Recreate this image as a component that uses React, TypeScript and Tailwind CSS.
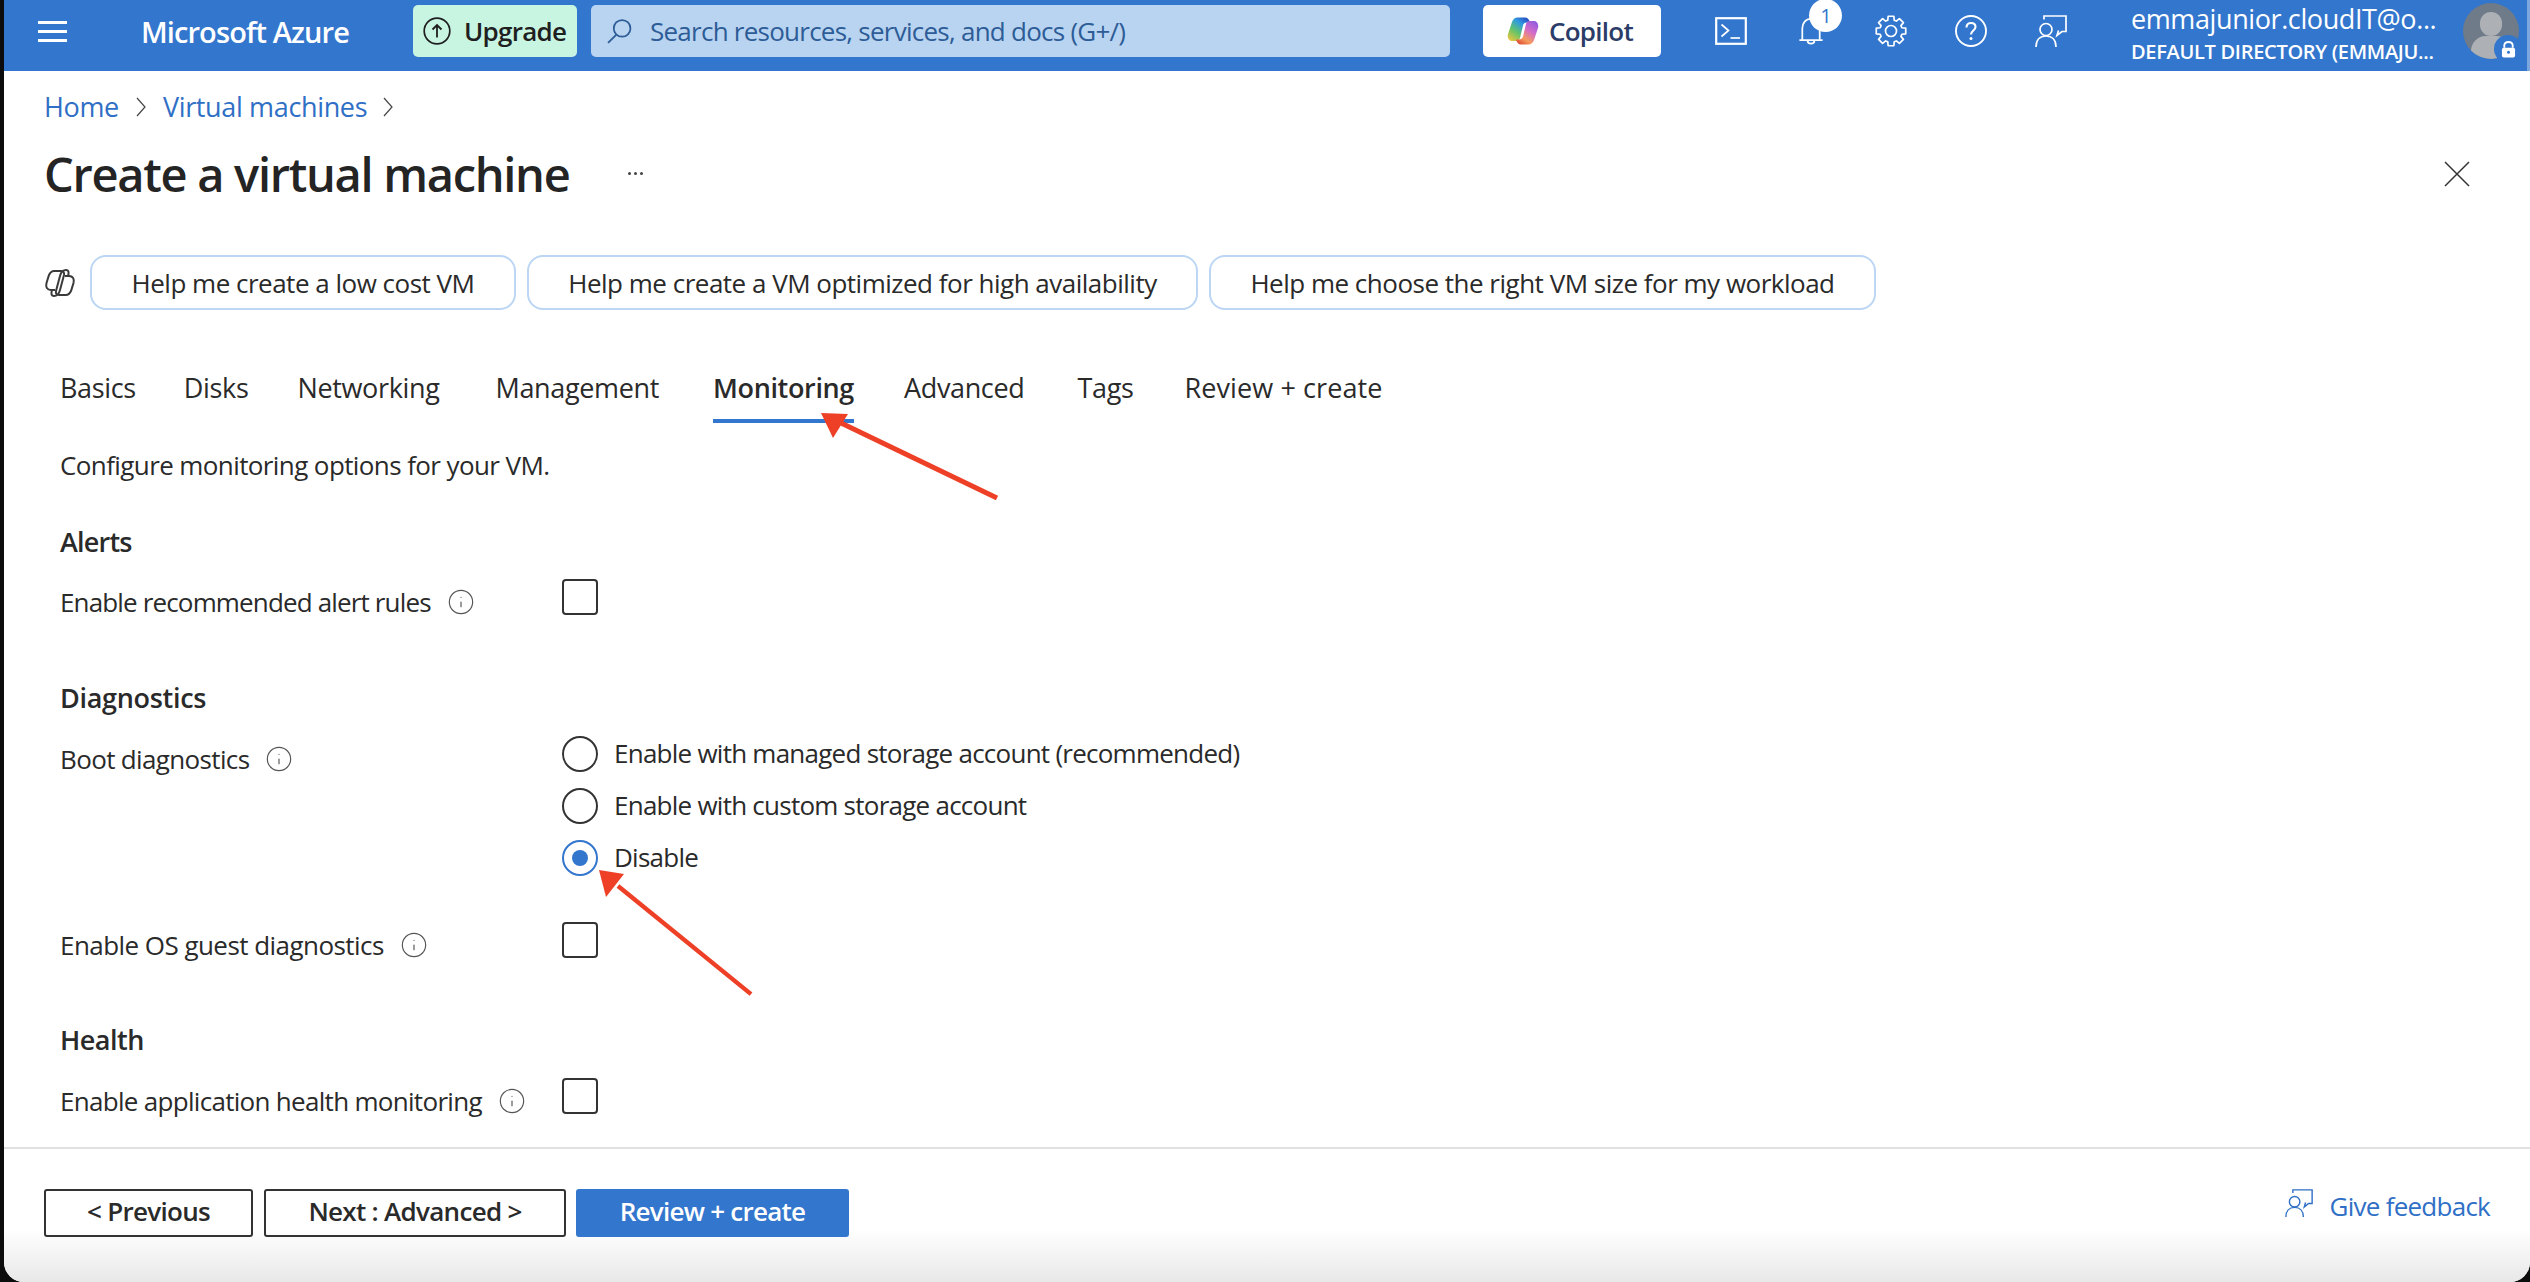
import React from "react";
import { Info } from "lucide-react";

function gearPath() {
  const pts: string[] = [];
  for (let i = 0; i < 8; i++) {
    const a = (i * Math.PI) / 4;
    const seq: [number, number][] = [
      [11.3, -0.29],
      [15, -0.19],
      [15, 0.19],
      [11.3, 0.29],
    ];
    for (const [r, d] of seq) {
      const x = 16 + r * Math.sin(a + d);
      const y = 16 - r * Math.cos(a + d);
      pts.push(`${x.toFixed(2)} ${y.toFixed(2)}`);
    }
  }
  return "M" + pts.join("L") + "Z";
}

function Feedback({ cls, w = "1.7" }: { cls: string; w?: string }) {
  return (
    <svg viewBox="0 0 32 32" fill="none" stroke="currentColor" strokeWidth={w} className={cls}>
      <path d="M9 4.5V1H31V16.5H27L22 20.5L23.5 15.5" />
      <circle cx="11" cy="14.5" r="6" />
      <path d="M1 32C1 25 5 21 11 21C17 21 21 25 21 32" />
    </svg>
  );
}

function InfoIcon() {
  return <Info size={28} strokeWidth={1} className="text-[#555] shrink-0" />;
}

function Check() {
  return <div className="w-[36px] h-[36px] border-2 border-[#333] rounded-[4px] bg-white shrink-0" />;
}

function Radio({ label, on }: { label: string; on?: boolean }) {
  return (
    <div className="flex items-center h-[36px] gap-[16px]">
      {on ? (
        <div className="w-[36px] h-[36px] rounded-full border-2 border-[#3376cd] flex items-center justify-center shrink-0">
          <div className="w-[16px] h-[16px] rounded-full bg-[#3376cd]" />
        </div>
      ) : (
        <div className="w-[36px] h-[36px] rounded-full border-2 border-[#333] shrink-0" />
      )}
      <span className="mt-[-2px]">{label}</span>
    </div>
  );
}

function Chip({ text, w }: { text: string; w: string }) {
  return (
    <div className={`${w} h-[55px] flex items-center justify-center border-2 border-[#bcd6f4] rounded-[16px] bg-white pt-[1px] tracking-[-0.5px]`}>
      {text}
    </div>
  );
}

function FieldLabel({ text, track }: { text: string; track: string }) {
  return (
    <div className="w-[502px] h-[46px] flex items-center gap-[16px] shrink-0">
      <span className={track}>{text}</span>
      <InfoIcon />
    </div>
  );
}

const tabs: { t: string; cls: string }[] = [
  { t: "Basics", cls: "" },
  { t: "Disks", cls: "ml-[48px]" },
  { t: "Networking", cls: "ml-[49px]" },
  { t: "Management", cls: "ml-[56px]" },
  { t: "Monitoring", cls: "ml-[54px] font-semibold border-b-[4px] border-[#3376cd]" },
  { t: "Advanced", cls: "ml-[50px]" },
  { t: "Tags", cls: "ml-[53px]" },
  { t: "Review + create", cls: "ml-[51px] tracking-[0.1px]" },
];

export default function App() {
  return (
    <div className="relative w-[2530px] h-[1282px] bg-[#0c0c0c] overflow-hidden pl-[4px] font-['Open_Sans','Noto_Sans',sans-serif] text-[26px] tracking-[-0.75px] text-[#2a2a2a]">
      <div className="h-full flex flex-col bg-white rounded-b-[20px] overflow-hidden">
        {/* top bar */}
        <header className="h-[71px] shrink-0 bg-[#3376cd] border-r-[3px] border-[#7ba6de] flex items-start text-white">
          <div className="w-[29px] mt-[21px] ml-[34px] flex flex-col gap-[6px]">
            <div className="h-[3px] bg-white" />
            <div className="h-[3px] bg-white" />
            <div className="h-[3px] bg-white" />
          </div>
          <div className="ml-[74px] mt-[11px] w-[272px] text-[29px] leading-[42px] font-semibold tracking-[-0.9px]">Microsoft Azure</div>
          <div className="mt-[5px] w-[164px] h-[52px] bg-[#c8f4e2] rounded-[5px] flex items-center pl-[10px] gap-[13px] text-[#1f1f1f] font-semibold text-[26px]">
            <svg viewBox="0 0 28 28" fill="none" stroke="currentColor" className="w-[28px] h-[28px] shrink-0">
              <circle cx="14" cy="14" r="12.8" strokeWidth="1.7" />
              <path d="M14 20.5V8M9.5 12.5L14 8L18.5 12.5" strokeWidth="1.8" />
            </svg>
            Upgrade
          </div>
          <div className="ml-[14px] mt-[5px] w-[859px] h-[52px] bg-[#b9d4f0] rounded-[5px] flex items-center pl-[16px] gap-[18px] text-[#2d5c97]">
            <svg viewBox="0 0 24 24" fill="none" stroke="currentColor" strokeWidth="1.7" className="w-[25px] h-[25px] shrink-0">
              <circle cx="14.5" cy="9" r="8" />
              <path d="M9 15L1 23" />
            </svg>
            Search resources, services, and docs (G+/)
          </div>
          <div className="ml-[33px] mt-[5px] w-[178px] h-[52px] bg-white rounded-[5px] flex items-center pl-[24px] gap-[10px] text-[#2b3c68] font-semibold">
            <svg viewBox="0 0 32 30" className="w-[32px] h-[30px] shrink-0">
              <defs>
                <linearGradient id="cpa" x1="0.1" y1="1" x2="0.75" y2="0">
                  <stop offset="0" stopColor="#f3c53c" />
                  <stop offset="0.4" stopColor="#63c46a" />
                  <stop offset="0.75" stopColor="#2f9be0" />
                  <stop offset="1" stopColor="#2a55c8" />
                </linearGradient>
                <linearGradient id="cpb" x1="0.85" y1="0" x2="0.2" y2="1">
                  <stop offset="0" stopColor="#8f5ce0" />
                  <stop offset="0.4" stopColor="#d46bc8" />
                  <stop offset="0.75" stopColor="#f59c5c" />
                  <stop offset="1" stopColor="#df4f38" />
                </linearGradient>
              </defs>
              <path d="M11 1.5C7.5 1.5 6 3.5 5 6L1 18C0 22 2 25 5.5 25H9.5C11.5 25 12.5 24 13 22L16 9.5C16.5 7.5 18 6.5 20 6.5H23C22 3 20.5 1.5 18 1.5Z" fill="url(#cpa)" />
              <path d="M21 28.5C24.5 28.5 26 26.5 27 24L31 12C32 8 30 5 26.5 5H22.5C20.5 5 19.5 6 19 8L16 20.5C15.5 22.5 14 23.5 12 23.5H9C10 27 11.5 28.5 14 28.5Z" fill="url(#cpb)" />
            </svg>
            Copilot
          </div>
          <svg viewBox="0 0 32 28" fill="none" stroke="white" className="ml-[54px] mt-[17px] w-[32px] h-[28px] shrink-0">
            <rect x="1.2" y="1.2" width="29.6" height="25.6" strokeWidth="2.2" />
            <path d="M6.5 7.5L13.5 13.5L6.5 19.5" strokeWidth="1.7" />
            <path d="M15.5 21H25" strokeWidth="1.7" />
          </svg>
          <div className="relative ml-[52px] mt-[17px] w-[24px] h-[29px] shrink-0">
            <svg viewBox="0 0 24 30" fill="none" stroke="white" strokeWidth="1.8" className="w-[24px] h-[29px]">
              <path d="M0 24H24M3 24V12C3 6 6.5 2 12 2C17.5 2 21 6 21 12V24" />
              <path d="M8.5 24.5C8.5 28.5 15.5 28.5 15.5 24.5" />
            </svg>
            <div className="absolute left-[10px] top-[-18px] w-[33px] h-[33px] rounded-full bg-white text-[#3376cd] text-[20px] flex items-center justify-center">1</div>
          </div>
          <svg viewBox="0 0 32 32" fill="none" stroke="white" strokeWidth="1.7" strokeLinejoin="round" className="ml-[52px] mt-[15px] w-[32px] h-[32px] shrink-0">
            <path d={gearPath()} />
            <circle cx="16" cy="16" r="5.5" />
          </svg>
          <svg viewBox="0 0 32 32" fill="none" stroke="white" className="ml-[48px] mt-[15px] w-[32px] h-[32px] shrink-0">
            <circle cx="16" cy="16" r="15" strokeWidth="1.9" />
            <path d="M11.5 12.5C11.5 9.5 13.5 8 16 8C18.5 8 20.5 9.5 20.5 12C20.5 15.5 16 15.5 16 19.5" strokeWidth="2.1" />
            <circle cx="16" cy="23.5" r="1.5" fill="white" stroke="none" />
          </svg>
          <Feedback cls="ml-[48px] mt-[15px] w-[32px] h-[32px] shrink-0" />
          <div className="ml-[64px] w-[321px] shrink-0">
            <div className="mt-[1px] h-[36px] leading-[36px] text-[27px] tracking-[-0.4px] whitespace-nowrap">emmajunior.cloudIT@o...</div>
            <div className="mt-[2px] h-[26px] leading-[26px] text-[20px] font-semibold tracking-[-0.3px] whitespace-nowrap">DEFAULT DIRECTORY (EMMAJU...</div>
          </div>
          <div className="relative mt-[3px] ml-[11px] w-[56px] h-[56px] rounded-full bg-[#6f7b88] overflow-hidden shrink-0">
            <div className="absolute left-[17px] top-[9px] w-[22px] h-[24px] rounded-full bg-[#adb1b6]" />
            <div className="absolute left-[8px] top-[33px] w-[40px] h-[30px] rounded-full bg-[#adb1b6]" />
          </div>
          <div className="absolute left-[2494px] top-[35px] w-[28px] h-[28px] rounded-full bg-[#3376cd] flex items-center justify-center">
            <svg viewBox="0 0 16 18" className="w-[15px] h-[17px]">
              <path d="M3.5 7V5C3.5 2.5 5.5 1 8 1C10.5 1 12.5 2.5 12.5 5V7" stroke="white" strokeWidth="2" fill="none" />
              <rect x="1" y="7" width="14" height="10.5" rx="2" fill="white" />
              <circle cx="8" cy="12" r="1.6" fill="#3376cd" />
            </svg>
          </div>
        </header>

        {/* page */}
        <main className="flex-1 min-h-0 overflow-hidden">
          <nav className="ml-[40px] mt-[16px] h-[40px] flex items-center text-[#2f6fc6] text-[27px] tracking-[-0.35px]">
            <span>Home</span>
            <svg viewBox="0 0 10 20" fill="none" stroke="#444" strokeWidth="1.2" className="w-[10px] h-[20px] ml-[17px] mr-[17px]"><path d="M1 1L9 10L1 19" /></svg>
            <span>Virtual machines</span>
            <svg viewBox="0 0 10 20" fill="none" stroke="#444" strokeWidth="1.2" className="w-[10px] h-[20px] ml-[16px]"><path d="M1 1L9 10L1 19" /></svg>
          </nav>
          <div className="ml-[40px] mt-[17px] h-[60px] flex items-center pr-[60px]">
            <h1 className="text-[47px] font-semibold tracking-[-1.3px] text-[#242424] w-[584px]">Create a virtual machine</h1>
            <div className="flex gap-[3px] mt-[-2px]">
              <div className="w-[3px] h-[3px] rounded-full bg-[#444]" />
              <div className="w-[3px] h-[3px] rounded-full bg-[#444]" />
              <div className="w-[3px] h-[3px] rounded-full bg-[#444]" />
            </div>
            <svg viewBox="0 0 26 26" fill="none" stroke="#333" strokeWidth="1.5" className="ml-auto w-[26px] h-[26px]">
              <path d="M1 1L25 25M25 1L1 25" />
            </svg>
          </div>
          <div className="ml-[40px] mt-[51px] flex items-center">
            <svg viewBox="0 0 32 30" fill="none" stroke="#3b3b3b" strokeWidth="2" className="w-[32px] h-[30px] shrink-0 mr-[14px]">
              <path d="M10 3H17C19.5 3 20.5 4.5 20 7L16 22C15 26 13 28 10 28C7 28 7 25 8 22" />
              <path d="M10 3C7 3 6 5 5 7L2.5 15C1.5 19 3 22 7 22H11" />
              <path d="M22 27H15C12.5 27 11.5 25.5 12 23L16 8C17 4 19 2 22 2C25 2 25 5 24 8" />
              <path d="M22 27C25 27 26 25 27 23L29.5 15C30.5 11 29 8 25 8H21" />
            </svg>
            <div className="flex gap-[11px]">
              <Chip text="Help me create a low cost VM" w="w-[426px]" />
              <Chip text="Help me create a VM optimized for high availability" w="w-[671px]" />
              <Chip text="Help me choose the right VM size for my workload" w="w-[667px]" />
            </div>
          </div>
          <div className="ml-[56px] mt-[50px] h-[63px] flex text-[27px] tracking-[-0.35px]">
            {tabs.map(({ t, cls }) => (
              <div key={t} className={`h-[63px] leading-[56px] ${cls}`}>
                {t}
              </div>
            ))}
          </div>
          <div className="ml-[56px] mt-[22px] h-[40px] leading-[40px] tracking-[-0.6px]">Configure monitoring options for your VM.</div>

          <div className="ml-[56px] mt-[35px] h-[40px] leading-[43px] font-semibold text-[27px] tracking-[-0.8px]">Alerts</div>
          <div className="ml-[56px] mt-[19px] flex">
            <FieldLabel text="Enable recommended alert rules" track="tracking-[-0.85px]" />
            <Check />
          </div>

          <div className="ml-[56px] mt-[51px] h-[40px] leading-[43px] font-semibold text-[27px] tracking-[-0.3px]">Diagnostics</div>
          <div className="ml-[56px] mt-[20px] flex">
            <FieldLabel text="Boot diagnostics" track="tracking-[-0.65px]" />
            <div className="flex flex-col gap-[16px]">
              <Radio label="Enable with managed storage account (recommended)" />
              <Radio label="Enable with custom storage account" />
              <Radio label="Disable" on />
            </div>
          </div>
          <div className="ml-[56px] mt-[46px] flex">
            <FieldLabel text="Enable OS guest diagnostics" track="tracking-[-0.55px]" />
            <Check />
          </div>

          <div className="ml-[56px] mt-[50px] h-[40px] leading-[43px] font-semibold text-[27px] tracking-[-0.5px]">Health</div>
          <div className="ml-[56px] mt-[20px] flex">
            <FieldLabel text="Enable application health monitoring" track="tracking-[-0.7px]" />
            <Check />
          </div>
        </main>

        {/* footer */}
        <footer className="h-[135px] shrink-0 border-t-2 border-[#e0e0e0] bg-linear-to-b from-white from-60% to-[#e8e8e8] flex items-start pt-[40px] pl-[40px] pr-[40px]">
          <div className="w-[209px] h-[48px] border-2 border-[#333] rounded-[3px] flex items-center justify-center font-semibold tracking-[-0.7px] pb-[3px]">&lt; Previous</div>
          <div className="ml-[11px] w-[302px] h-[48px] border-2 border-[#333] rounded-[3px] flex items-center justify-center font-semibold tracking-[-0.7px] pb-[3px]">Next : Advanced &gt;</div>
          <div className="ml-[10px] w-[273px] h-[48px] bg-[#3376cd] rounded-[3px] flex items-center justify-center font-semibold text-white pb-[3px]">Review + create</div>
          <div className="ml-auto flex items-center gap-[17px] text-[#2f6fc6] mt-[-2px]">
            <Feedback cls="w-[28px] h-[28px] mt-[-8px]" w="1.6" />
            Give feedback
          </div>
        </footer>
      </div>

      {/* annotation arrows */}
      <svg viewBox="0 0 200 110" className="absolute left-[810px] top-[405px] w-[200px] h-[110px]" fill="#ee4027">
        <path d="M188.1 90.75L185.9 95.25L28.9 19.75L31.1 15.25Z" />
        <path d="M11 8L38 9L23 33Z" />
      </svg>
      <svg viewBox="0 0 170 140" className="absolute left-[590px] top-[860px] w-[170px] h-[140px]" fill="#ee4027">
        <path d="M162.4 132.5L159.6 135.75L26.6 27.75L29.4 24.25Z" />
        <path d="M9 10L34 14L16 37Z" />
      </svg>
    </div>
  );
}
